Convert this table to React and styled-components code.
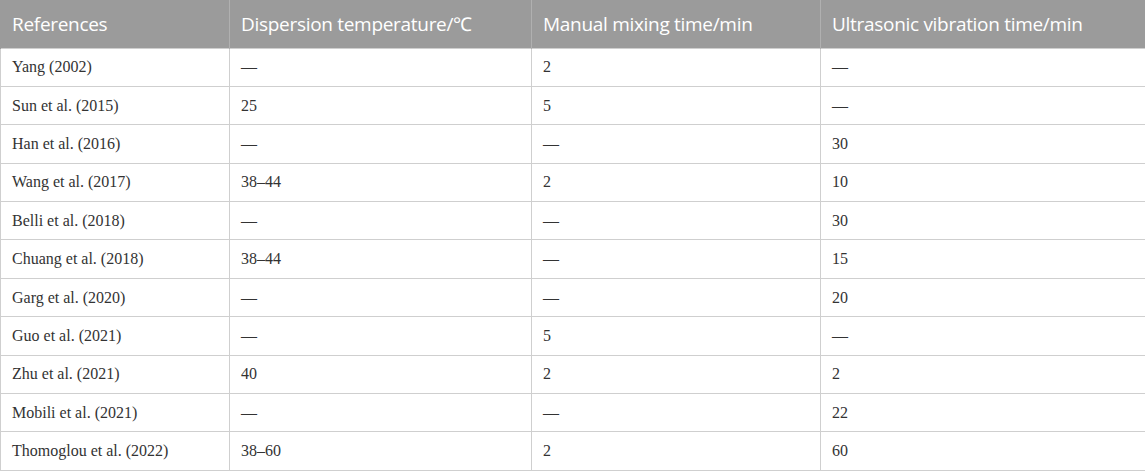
import React from 'react'
import styled, { createGlobalStyle } from 'styled-components'

const GlobalStyle = createGlobalStyle`
    html, body {
        margin: 0;
        padding: 0;
        background: #fff;
    }
`

const Table = styled.table`
    width: 1145px;
    border-collapse: collapse;
    table-layout: fixed;
`

const HeadCell = styled.th`
    width: ${props => props.width}px;
    height: 48px;
    padding: 0 11px;
    box-sizing: border-box;
    background: #9b9b9b;
    color: #fff;
    font-family: "Open Sans", sans-serif;
    font-weight: 400;
    font-size: 19px;
    text-align: left;
    border-left: 1px solid #b0b0b0;
    border-right: 1px solid #b0b0b0;
    letter-spacing: -0.3px;
    &:first-child {
        border-left: 1px solid #9b9b9b;
    }
`

const Row = styled.tr`
    height: 38.4px;
`

const Cell = styled.td`
    padding: 0 11px;
    border: 1px solid #cfcfcf;
    font-family: "Liberation Serif", "Times New Roman", serif;
    font-size: 16px;
    color: #333;
    white-space: nowrap;
`

const columns = [
    { title: 'References', width: 229 },
    { title: 'Dispersion temperature/℃', width: 302 },
    { title: 'Manual mixing time/min', width: 289 },
    { title: 'Ultrasonic vibration time/min', width: 325 },
]

const rows = [
    ['Yang (2002)', '—', '2', '—'],
    ['Sun et al. (2015)', '25', '5', '—'],
    ['Han et al. (2016)', '—', '—', '30'],
    ['Wang et al. (2017)', '38–44', '2', '10'],
    ['Belli et al. (2018)', '—', '—', '30'],
    ['Chuang et al. (2018)', '38–44', '—', '15'],
    ['Garg et al. (2020)', '—', '—', '20'],
    ['Guo et al. (2021)', '—', '5', '—'],
    ['Zhu et al. (2021)', '40', '2', '2'],
    ['Mobili et al. (2021)', '—', '—', '22'],
    ['Thomoglou et al. (2022)', '38–60', '2', '60'],
]

export default function App() {
    return (
        <>
            <GlobalStyle />
            <Table>
                <thead>
                    <tr>
                        {columns.map(col => (
                            <HeadCell key={col.title} width={col.width}>{col.title}</HeadCell>
                        ))}
                    </tr>
                </thead>
                <tbody>
                    {rows.map(row => (
                        <Row key={row[0]}>
                            {row.map((value, i) => (
                                <Cell key={i}>{value}</Cell>
                            ))}
                        </Row>
                    ))}
                </tbody>
            </Table>
        </>
    )
}
